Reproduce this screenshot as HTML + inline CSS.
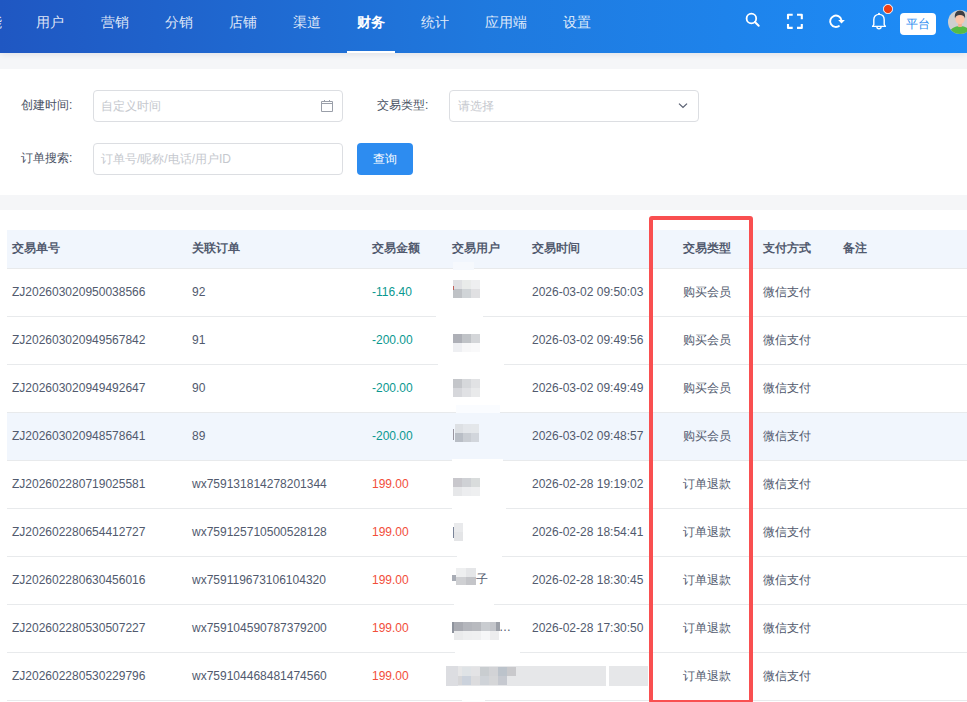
<!DOCTYPE html>
<html><head><meta charset="utf-8">
<style>
*{margin:0;padding:0;box-sizing:border-box}
html,body{width:967px;height:702px;overflow:hidden;background:#f5f6f8;font-family:"Liberation Sans",sans-serif;color:#515a6e}
.hdr{position:absolute;left:0;top:0;width:967px;height:53px;background:linear-gradient(90deg,#1f57c2 0%,#1f79de 50%,#1d8df8 100%);box-shadow:0 1px 7px rgba(0,20,60,.10)}
.nav{position:absolute;top:0;height:52px;line-height:44px;font-size:14px;color:rgba(255,255,255,.86);white-space:nowrap}
.nav.act{color:#fff;font-weight:bold}
.uline{position:absolute;left:347px;top:51px;width:48px;height:2px;background:#fff}
.panel{position:absolute;left:0;top:69px;width:967px;height:126px;background:#fff}
.lbl{position:absolute;font-size:12px;color:#4a5264;line-height:16px;white-space:nowrap}
.inp{position:absolute;border:1px solid #dcdee2;border-radius:4px;background:#fff;height:32px}
.ph{position:absolute;font-size:12px;color:#c5c8ce;line-height:16px;white-space:nowrap}
.btn{position:absolute;left:357px;top:143px;width:56px;height:32px;background:#2d8cf0;border-radius:4px;color:#fff;font-size:12px;line-height:32px;text-align:center}
.card{position:absolute;left:0;top:210px;width:967px;height:492px;background:#fff}
.th{position:absolute;left:7px;top:230px;width:960px;height:39px;background:#f1f6fd;border-bottom:1px solid #e8eaec}
.tht{position:absolute;font-size:12px;font-weight:bold;color:#515a6e;line-height:16px;white-space:nowrap}
.row{position:absolute;left:7px;width:960px;height:48px;border-bottom:1px solid #e8eaec}
.row.hl{background:#f1f6fd}
.td{position:absolute;font-size:12px;color:#515a6e;line-height:16px;white-space:nowrap}
.g{color:#0a9890}
.r{color:#f24e3a}
.red{position:absolute;left:649px;top:216px;width:104px;height:488px;border:4px solid #f94f50;border-radius:3px}
.bz{position:absolute}
.ico{position:absolute;z-index:2}
</style></head><body>
<div class="hdr"></div>
<div class="nav" style="left:-26px">功能</div>
<div class="nav" style="left:36px">用户</div>
<div class="nav" style="left:101px">营销</div>
<div class="nav" style="left:165px">分销</div>
<div class="nav" style="left:229px">店铺</div>
<div class="nav" style="left:293px">渠道</div>
<div class="nav act" style="left:357px">财务</div>
<div class="nav" style="left:421px">统计</div>
<div class="nav" style="left:485px">应用端</div>
<div class="nav" style="left:563px">设置</div>
<div class="uline"></div>
<svg class="ico" style="left:740px;top:8px" width="24" height="24" viewBox="0 0 24 24"><circle cx="11.4" cy="10.5" r="4.8" fill="none" stroke="#fff" stroke-width="1.8"/><path d="M14.9 14 L18.7 17.8" stroke="#fff" stroke-width="2" stroke-linecap="round"/></svg>
<svg class="ico" style="left:783px;top:9px" width="24" height="24" viewBox="0 0 24 24"><path d="M5 10.2 V5.7 H9.7 M14 5.7 H18.8 V10.2 M18.8 14.9 V18.9 H14 M9.7 18.9 H5 V14.9" fill="none" stroke="#fff" stroke-width="2.1" stroke-linejoin="round"/></svg>
<svg class="ico" style="left:824px;top:9px" width="24" height="24" viewBox="0 0 24 24"><path d="M15.6 16.6 A5.7 5.7 0 1 1 17.4 10.9" fill="none" stroke="#fff" stroke-width="1.9"/><path d="M14.2 10.9 L20.9 10.9 L17.5 14.4 Z" fill="#fff"/></svg>
<svg class="ico" style="left:867px;top:9px" width="24" height="24" viewBox="0 0 24 24"><path d="M5.6 17.4 L6.8 15.6 V10.8 C6.8 7.4 9 5.4 12 5.4 C15 5.4 17.2 7.4 17.2 10.8 V15.6 L18.4 17.4 Z" fill="none" stroke="#fff" stroke-width="1.4" stroke-linejoin="round"/><path d="M9.9 17.7 A2.1 2 0 0 0 14.1 17.7" fill="none" stroke="#fff" stroke-width="1.4"/><circle cx="12" cy="4.7" r="1" fill="#fff"/></svg>
<div class="ico" style="left:883.3px;top:4.3px;width:9.4px;height:9.4px;border-radius:50%;background:#ed3f14;border:1px solid #fff"></div>
<div class="ico" style="left:900px;top:13px;width:36px;height:22px;border-radius:4px;background:#fff;color:#2d8cf0;font-size:12px;line-height:22px;text-align:center">平台</div>
<svg class="ico" style="left:948px;top:10px" width="24" height="24" viewBox="0 0 24 24"><defs><clipPath id="cp"><circle cx="12" cy="12" r="12"/></clipPath></defs><g clip-path="url(#cp)"><rect width="24" height="24" fill="#cfcfcf"/><path d="M1 26 C1 18.5 6 16.3 12 16.3 C18 16.3 23 18.5 23 26 Z" fill="#55bb44"/><rect x="10.2" y="12.5" width="3.6" height="4.5" fill="#f2b28f"/><ellipse cx="12" cy="9.2" rx="4.6" ry="5" fill="#fcc4a8"/><path d="M7 8.5 C6.2 3.5 8.5 0.6 12 0.6 C15.5 0.6 17.8 3.5 17 8.5 C16.5 6.2 15 5 12 5 C9 5 7.5 6.2 7 8.5 Z" fill="#3e3e42"/></g></svg>

<div class="panel"></div>
<div class="lbl" style="left:21px;top:97px">创建时间:</div>
<div class="inp" style="left:93px;top:90px;width:250px"></div>
<div class="ph" style="left:101px;top:98px">自定义时间</div>
<svg class="ico" style="left:310px;top:90px" width="40" height="32" viewBox="0 0 40 32"><path d="M11.5 11.5 H22.5 V21.5 H11.5 Z M11.5 13.5 H22.5" fill="none" stroke="#9a9fa9" stroke-width="1"/><path d="M14.5 10 V12 M19.5 10 V12" stroke="#9a9fa9" stroke-width="1"/></svg>
<svg class="ico" style="left:665px;top:90px" width="40" height="32" viewBox="0 0 40 32"><path d="M14 13.6 L18 17.4 L22 13.6" fill="none" stroke="#5a6172" stroke-width="1.3"/></svg>
<div class="lbl" style="left:377px;top:97px">交易类型:</div>
<div class="inp" style="left:449px;top:90px;width:250px"></div>
<div class="ph" style="left:458px;top:98px">请选择</div>
<div class="lbl" style="left:21px;top:150px">订单搜索:</div>
<div class="inp" style="left:93px;top:143px;width:250px"></div>
<div class="ph" style="left:101px;top:151px">订单号/昵称/电话/用户ID</div>
<div class="btn">查询</div>

<div class="card"></div>
<div class="th"></div>
<div class="tht" style="left:12px;top:240px">交易单号</div>
<div class="tht" style="left:192px;top:240px">关联订单</div>
<div class="tht" style="left:372px;top:240px">交易金额</div>
<div class="tht" style="left:452px;top:240px">交易用户</div>
<div class="tht" style="left:532px;top:240px">交易时间</div>
<div class="tht" style="left:683px;top:240px">交易类型</div>
<div class="tht" style="left:763px;top:240px">支付方式</div>
<div class="tht" style="left:843px;top:240px">备注</div>

<!--ROWS-->
<div class="row" style="top:269px"></div>
<div class="td" style="left:12px;top:284px">ZJ202603020950038566</div>
<div class="td" style="left:192px;top:284px">92</div>
<div class="td g" style="left:372px;top:284px">-116.40</div>
<div class="td" style="left:532px;top:284px">2026-03-02 09:50:03</div>
<div class="td" style="left:683px;top:284px">购买会员</div>
<div class="td" style="left:763px;top:284px">微信支付</div>
<div class="row" style="top:317px"></div>
<div class="td" style="left:12px;top:332px">ZJ202603020949567842</div>
<div class="td" style="left:192px;top:332px">91</div>
<div class="td g" style="left:372px;top:332px">-200.00</div>
<div class="td" style="left:532px;top:332px">2026-03-02 09:49:56</div>
<div class="td" style="left:683px;top:332px">购买会员</div>
<div class="td" style="left:763px;top:332px">微信支付</div>
<div class="row" style="top:365px"></div>
<div class="td" style="left:12px;top:380px">ZJ202603020949492647</div>
<div class="td" style="left:192px;top:380px">90</div>
<div class="td g" style="left:372px;top:380px">-200.00</div>
<div class="td" style="left:532px;top:380px">2026-03-02 09:49:49</div>
<div class="td" style="left:683px;top:380px">购买会员</div>
<div class="td" style="left:763px;top:380px">微信支付</div>
<div class="row hl" style="top:413px"></div>
<div class="td" style="left:12px;top:428px">ZJ202603020948578641</div>
<div class="td" style="left:192px;top:428px">89</div>
<div class="td g" style="left:372px;top:428px">-200.00</div>
<div class="td" style="left:532px;top:428px">2026-03-02 09:48:57</div>
<div class="td" style="left:683px;top:428px">购买会员</div>
<div class="td" style="left:763px;top:428px">微信支付</div>
<div class="row" style="top:461px"></div>
<div class="td" style="left:12px;top:476px">ZJ202602280719025581</div>
<div class="td" style="left:192px;top:476px">wx759131814278201344</div>
<div class="td r" style="left:372px;top:476px">199.00</div>
<div class="td" style="left:532px;top:476px">2026-02-28 19:19:02</div>
<div class="td" style="left:683px;top:476px">订单退款</div>
<div class="td" style="left:763px;top:476px">微信支付</div>
<div class="row" style="top:509px"></div>
<div class="td" style="left:12px;top:524px">ZJ202602280654412727</div>
<div class="td" style="left:192px;top:524px">wx759125710500528128</div>
<div class="td r" style="left:372px;top:524px">199.00</div>
<div class="td" style="left:532px;top:524px">2026-02-28 18:54:41</div>
<div class="td" style="left:683px;top:524px">订单退款</div>
<div class="td" style="left:763px;top:524px">微信支付</div>
<div class="row" style="top:557px"></div>
<div class="td" style="left:12px;top:572px">ZJ202602280630456016</div>
<div class="td" style="left:192px;top:572px">wx759119673106104320</div>
<div class="td r" style="left:372px;top:572px">199.00</div>
<div class="td" style="left:532px;top:572px">2026-02-28 18:30:45</div>
<div class="td" style="left:683px;top:572px">订单退款</div>
<div class="td" style="left:763px;top:572px">微信支付</div>
<div class="row" style="top:605px"></div>
<div class="td" style="left:12px;top:620px">ZJ202602280530507227</div>
<div class="td" style="left:192px;top:620px">wx759104590787379200</div>
<div class="td r" style="left:372px;top:620px">199.00</div>
<div class="td" style="left:532px;top:620px">2026-02-28 17:30:50</div>
<div class="td" style="left:683px;top:620px">订单退款</div>
<div class="td" style="left:763px;top:620px">微信支付</div>
<div class="row" style="top:653px"></div>
<div class="td" style="left:12px;top:668px">ZJ202602280530229796</div>
<div class="td" style="left:192px;top:668px">wx759104468481474560</div>
<div class="td r" style="left:372px;top:668px">199.00</div>
<div class="td" style="left:683px;top:668px">订单退款</div>
<div class="td" style="left:763px;top:668px">微信支付</div>
<!--/ROWS-->
<!--BLUR-->
<div class="bz" style="left:453px;top:262px;width:21px;height:8px;background:#f6f9fd"></div>
<div class="bz" style="left:436px;top:315px;width:47px;height:9px;background:#fff"></div>
<div class="bz" style="left:438px;top:363px;width:66px;height:8px;background:#fff"></div>
<div class="bz" style="left:456px;top:405px;width:44px;height:8px;background:#fafcff"></div>
<div class="bz" style="left:452px;top:459px;width:51px;height:9px;background:#fff"></div>
<div class="bz" style="left:452px;top:506px;width:54px;height:9px;background:#fff"></div>
<div class="bz" style="left:457px;top:551px;width:45px;height:10px;background:#fff"></div>
<div class="bz" style="left:454px;top:603px;width:40px;height:9px;background:#fff"></div>
<div class="bz" style="left:455px;top:648px;width:65px;height:9px;background:#fff"></div>
<div class="bz" style="left:462px;top:694px;width:23px;height:8px;background:#fff"></div>
<div class="bz" style="left:453px;top:280px;width:9px;height:9px;background:#dfe0e3"></div>
<div class="bz" style="left:462px;top:280px;width:9px;height:9px;background:#e9ebea"></div>
<div class="bz" style="left:471px;top:280px;width:9px;height:9px;background:#eeeff0"></div>
<div class="bz" style="left:453px;top:289px;width:9px;height:9px;background:#bfc2c6"></div>
<div class="bz" style="left:462px;top:289px;width:9px;height:9px;background:#d0d4d7"></div>
<div class="bz" style="left:471px;top:289px;width:9px;height:9px;background:#e0e0e2"></div>
<div class="bz" style="left:453px;top:286px;width:1px;height:4px;background:#c0605a"></div>
<div class="bz" style="left:453px;top:334px;width:9px;height:9px;background:#aeb0b7"></div>
<div class="bz" style="left:462px;top:334px;width:9px;height:9px;background:#c0c3c7"></div>
<div class="bz" style="left:471px;top:334px;width:9px;height:9px;background:#d4d6d9"></div>
<div class="bz" style="left:453px;top:343px;width:9px;height:9px;background:#eeeff2"></div>
<div class="bz" style="left:462px;top:343px;width:9px;height:9px;background:#f7f7f8"></div>
<div class="bz" style="left:471px;top:343px;width:9px;height:9px;background:#f9f9fa"></div>
<div class="bz" style="left:453px;top:379px;width:9px;height:9px;background:#c4c6ca"></div>
<div class="bz" style="left:462px;top:379px;width:9px;height:9px;background:#d6d8db"></div>
<div class="bz" style="left:471px;top:379px;width:9px;height:9px;background:#e1e2e4"></div>
<div class="bz" style="left:453px;top:388px;width:9px;height:9px;background:#d6d7db"></div>
<div class="bz" style="left:462px;top:388px;width:9px;height:9px;background:#e0e1e4"></div>
<div class="bz" style="left:471px;top:388px;width:9px;height:9px;background:#e9eaeb"></div>
<div class="bz" style="left:455px;top:424px;width:8px;height:9px;background:#dde0e4"></div>
<div class="bz" style="left:463px;top:424px;width:8px;height:9px;background:#e3e6ea"></div>
<div class="bz" style="left:471px;top:424px;width:8px;height:9px;background:#e4e7ea"></div>
<div class="bz" style="left:455px;top:433px;width:8px;height:9px;background:#b9bec6"></div>
<div class="bz" style="left:463px;top:433px;width:8px;height:9px;background:#c9cdd3"></div>
<div class="bz" style="left:471px;top:433px;width:8px;height:9px;background:#d2d6dc"></div>
<div class="bz" style="left:453px;top:429px;width:1.3px;height:11px;background:#9a96a0"></div>
<div class="bz" style="left:453px;top:478px;width:9px;height:9px;background:#c8c7cc"></div>
<div class="bz" style="left:462px;top:478px;width:9px;height:9px;background:#cfd1d5"></div>
<div class="bz" style="left:471px;top:478px;width:9px;height:9px;background:#d9dcdc"></div>
<div class="bz" style="left:453px;top:487px;width:9px;height:9px;background:#e6e7e9"></div>
<div class="bz" style="left:462px;top:487px;width:9px;height:9px;background:#ecedef"></div>
<div class="bz" style="left:471px;top:487px;width:9px;height:9px;background:#eeeff0"></div>
<div class="bz" style="left:454px;top:523px;width:9px;height:9px;background:#e9eaec"></div>
<div class="bz" style="left:454px;top:532px;width:9px;height:9px;background:#e4e5e7"></div>
<div class="bz" style="left:453px;top:527px;width:1.3px;height:11px;background:#7a8499"></div>
<div class="bz" style="left:456px;top:568.0px;width:10px;height:8.5px;background:#eeeff0"></div>
<div class="bz" style="left:466px;top:568.0px;width:10px;height:8.5px;background:#e5e6e8"></div>
<div class="bz" style="left:456px;top:576.5px;width:10px;height:8.5px;background:#cfd0d3"></div>
<div class="bz" style="left:466px;top:576.5px;width:10px;height:8.5px;background:#c4c5c9"></div>
<div class="td" style="left:476px;top:571px">子</div>
<div class="bz" style="left:452px;top:575px;width:4px;height:6px;background:#a8acb5"></div>
<div class="bz" style="left:454px;top:622px;width:9px;height:9px;background:#a9abb2"></div>
<div class="bz" style="left:463px;top:622px;width:9px;height:9px;background:#b4b6bc"></div>
<div class="bz" style="left:472px;top:622px;width:9px;height:9px;background:#b8babf"></div>
<div class="bz" style="left:481px;top:622px;width:9px;height:9px;background:#c9ccd0"></div>
<div class="bz" style="left:490px;top:622px;width:9px;height:9px;background:#c3c5ca"></div>
<div class="bz" style="left:454px;top:631px;width:9px;height:9px;background:#eaebec"></div>
<div class="bz" style="left:463px;top:631px;width:9px;height:9px;background:#eeeff0"></div>
<div class="bz" style="left:472px;top:631px;width:9px;height:9px;background:#eff0f1"></div>
<div class="bz" style="left:481px;top:631px;width:9px;height:9px;background:#f6f7f8"></div>
<div class="bz" style="left:490px;top:631px;width:9px;height:9px;background:#ededee"></div>
<div class="bz" style="left:452px;top:622px;width:2px;height:11px;background:#8e939d"></div>
<div class="td" style="left:499px;top:619px;width:14px;overflow:hidden">…</div>
<div class="bz" style="left:496px;top:622px;width:4px;height:9px;background:#9ca0a8"></div>
<div class="bz" style="left:446px;top:666px;width:160px;height:20px;background:#e6e7e9"></div>
<div class="bz" style="left:609px;top:666px;width:39px;height:20px;background:#e6e7e9"></div>
<div class="bz" style="left:453px;top:667px;width:9px;height:9px;background:#e6e6e7"></div>
<div class="bz" style="left:462px;top:667px;width:9px;height:9px;background:#dfe3e6"></div>
<div class="bz" style="left:471px;top:667px;width:9px;height:9px;background:#e3e3e5"></div>
<div class="bz" style="left:480px;top:667px;width:9px;height:9px;background:#c9cdd0"></div>
<div class="bz" style="left:489px;top:667px;width:9px;height:9px;background:#d2d3d6"></div>
<div class="bz" style="left:498px;top:667px;width:9px;height:9px;background:#bcc3cb"></div>
<div class="bz" style="left:507px;top:667px;width:9px;height:9px;background:#c9c9cc"></div>
<div class="bz" style="left:453px;top:676px;width:9px;height:9px;background:#d6d6d8"></div>
<div class="bz" style="left:462px;top:676px;width:9px;height:9px;background:#cbd2dc"></div>
<div class="bz" style="left:471px;top:676px;width:9px;height:9px;background:#dcdcde"></div>
<div class="bz" style="left:480px;top:676px;width:9px;height:9px;background:#cfd3d8"></div>
<div class="bz" style="left:489px;top:676px;width:9px;height:9px;background:#d5d6d8"></div>
<div class="bz" style="left:498px;top:676px;width:9px;height:9px;background:#c6c9d0"></div>
<div class="bz" style="left:446px;top:666px;width:12px;height:20px;background:#dcdde1"></div>
<!--/BLUR-->
<div class="red"></div>
</body></html>
